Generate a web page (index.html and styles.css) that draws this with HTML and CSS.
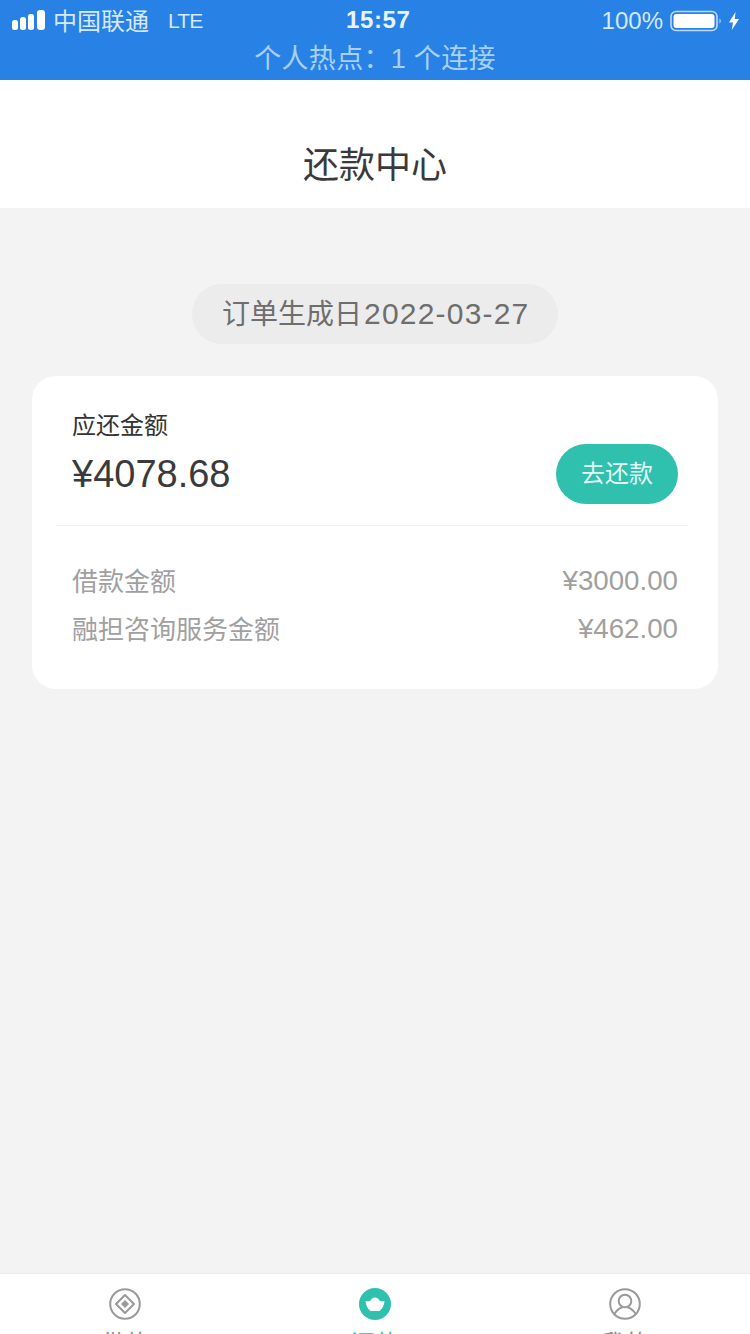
FILE: index.html
```html
<!DOCTYPE html>
<html lang="zh-CN">
<head>
<meta charset="utf-8">
<title>还款中心</title>
<link rel="stylesheet" href="styles.css">
</head>
<body>
<div class="phone">
  <header class="status">
    <div class="status-row">
      <div class="status-left">
        <svg class="signal" width="33" height="20" viewBox="0 0 33 20"><rect x="0" y="10" width="6" height="10" rx="2.500"/><rect x="8" y="7" width="6" height="13" rx="2.500"/><rect x="16" y="4" width="6" height="16" rx="2.500"/><rect x="25" y="0" width="8" height="20" rx="3"/></svg>
        <span class="carrier">中国联通</span>
        <span class="net">LTE</span>
      </div>
      <div class="clock">15:57</div>
      <div class="status-right">
        <span class="pct">100%</span>
        <svg width="53" height="22" viewBox="0 0 53 22"><rect x="1" y="1.500" width="46" height="19" rx="5" fill="none" stroke="#bcd9f7" stroke-width="1.600"/><rect x="3.500" y="4" width="41" height="14" rx="3" fill="#fff"/><path d="M49.500 8.500c1.600.4 1.600 4.600 0 5z" fill="#bcd9f7"/></svg>
        <svg width="12" height="20" viewBox="0 0 12 20"><path d="M7.500 1 1 11.500h4L3.800 19 11 8H6.800z" fill="#fff"/></svg>
      </div>
    </div>
    <div class="hotspot">个人热点：1 个连接</div>
  </header>
  <div class="nav"><h1 class="nav-title">还款中心</h1></div>
  <main class="content">
    <div class="date-wrap"><div class="date-pill">订单生成日<span class="date-num">2022-03-27</span></div></div>
    <section class="card">
      <div class="due">
        <div>
          <div class="due-label">应还金额</div>
          <div class="due-amount">¥4078.68</div>
        </div>
        <button class="pay"><span class="pay-text">去还款</span></button>
      </div>
      <div class="divider"></div>
      <div class="rows">
        <div class="row"><span class="row-label">借款金额</span><span class="num">¥3000.00</span></div>
        <div class="row"><span class="row-label">融担咨询服务金额</span><span class="num">¥462.00</span></div>
      </div>
    </section>
  </main>
  <nav class="tabs">
    <div class="tab">
      <svg width="32" height="32" viewBox="0 0 32 32" fill="none" stroke="#999" stroke-width="2"><circle cx="16" cy="16" r="14.800"/><path d="M16 7 25 16 16 25 7 16z" stroke-linejoin="round"/><path d="M16 12 20 16 16 20 12 16z" fill="#999" stroke="none"/></svg>
      <span>借款</span>
    </div>
    <div class="tab tab-active">
      <svg width="32" height="32" viewBox="0 0 32 32"><circle cx="16" cy="16" r="16" fill="#2fc0ae"/><path d="M6.500 13c2 .6 3.500.4 5-.6C12.500 10.500 14 9.500 16 9.500s3.500 1 4.500 2.900c1.500 1 3 1.200 5 .6-.3 3.800-1.800 7.500-5 10h-9c-3.200-2.500-4.700-6.200-5-10z" fill="#fff"/></svg>
      <span>还款</span>
    </div>
    <div class="tab">
      <svg width="32" height="32" viewBox="0 0 32 32" fill="none" stroke="#999" stroke-width="2"><circle cx="16" cy="16" r="14.800"/><circle cx="16" cy="13" r="6.300"/><path d="M5.500 25.800C8 21.800 11 20 13.500 19.300M26.500 25.800C24 21.800 21 20 18.500 19.300"/></svg>
      <span>我的</span>
    </div>
  </nav>
</div>
</body>
</html>
```
FILE: styles.css
```css
* { box-sizing: border-box; }
html, body { margin: 0; padding: 0; }
body { font-family: "Liberation Sans", "Noto Sans CJK SC", sans-serif; }
.phone { width: 750px; height: 1334px; overflow: hidden; display: flex; flex-direction: column; background: #f3f3f4; }
.status { height: 80px; flex: none; background: #2882e5; color: #fff; display: flex; flex-direction: column; }
.status-row { height: 42px; padding: 0 10px 0 12px; display: flex; align-items: center; justify-content: space-between; position: relative; }
.status-left, .status-right { display: flex; align-items: center; }
.signal { fill: #fff; margin-right: 8px; margin-bottom: 2px; }
.carrier { font-size: 24px; color: #d6e8fb; margin-bottom: 4px; }
.net { font-size: 21px; margin-left: 19px; color: #d6e8fb; letter-spacing: -.8px; }
.clock { font-size: 24px; font-weight: 700; color: #e9f3fd; position: absolute; left: 346px; top: 6px; letter-spacing: .6px; }
.pct { font-size: 24px; color: #d6e8fb; margin-right: 7px; }
.status-right svg:last-child { margin-left: 5px; }
.hotspot { text-align: center; font-size: 27px; line-height: 34px; color: #a9d0f6; letter-spacing: .3px; }
.nav { height: 128px; flex: none; background: #fff; display: flex; align-items: flex-end; justify-content: center; }
.nav-title { margin: 0 0 19px; font-size: 36px; line-height: 46px; font-weight: 400; color: #3a3a3a; }
.content { flex: 1; padding: 76px 32px 0; }
.date-wrap { display: flex; justify-content: center; }
.date-pill { height: 60px; width: 366px; border-radius: 30px; background: #ececed; color: #6e6e6e; font-size: 28px; line-height: 60px; padding-left: 30px; white-space: nowrap; }
.date-num { font-size: 30px; letter-spacing: 1.200px; margin-left: 2px; }
.card { margin-top: 32px; height: 313px; background: #fff; border-radius: 24px; padding: 0 24px; }
.due { height: 149px; padding: 33px 16px 0; display: flex; justify-content: space-between; }
.due-label { font-size: 24px; line-height: 34px; color: #333; }
.due-amount { font-size: 38px; line-height: 48px; margin-top: 7px; color: #3a3a3a; }
.pay { width: 122px; height: 60px; margin-top: 35px; border: 0; padding: 0 0 5px; border-radius: 30px; background: #2fc0ae; color: #e4f8f5; font: inherit; font-size: 24px; }
.pay-text { color: #e4f8f5; }
.divider { height: 1px; background: #f1f1f1; margin-right: 6px; }
.rows { padding: 31px 16px 0; }
.row { display: flex; justify-content: space-between; height: 48px; align-items: center; font-size: 26px; color: #a0a0a0; }
.row-label { margin-bottom: 4px; }
.row .num { font-size: 27.700px; }
.tabs { height: 61px; flex: none; background: #fff; border-top: 1px solid #ececec; display: grid; grid-template-columns: repeat(3, 250px); overflow: hidden; }
.tab { display: flex; flex-direction: column; align-items: center; padding-top: 14px; gap: 9px; font-size: 24px; line-height: 30px; color: #8f8f8f; }
.tab svg { flex: none; }
.tab-active { color: #2fc0ae; }
```
